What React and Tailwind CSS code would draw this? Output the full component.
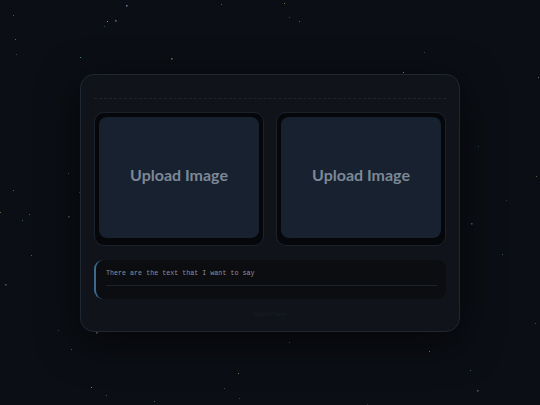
import React from "react";

function rng(seed) {
  let s = seed;
  return () => {
    s = (s * 16807) % 2147483647;
    return (s - 1) / 2147483646;
  };
}

const stars = (() => {
  const r = rng(42);
  const colors = ["#6b7a99", "#4f8a8b", "#8a7d5a", "#5d6b8a", "#c9b36a", "#3f6f7a"];
  const out = [];
  for (let i = 0; i < 80; i++) {
    out.push({
      x: Math.round(r() * 540),
      y: Math.round(r() * 405),
      c: colors[Math.floor(r() * colors.length)],
      o: 0.35 + r() * 0.6,
      s: r() > 0.88 ? 1.6 : 1,
    });
  }
  return out;
})();

function UploadBox() {
  return (
    <div className="h-[134px] rounded-[10px] bg-[#05070b] border border-[#1c222c] pt-[4px] px-[4px] pb-[7px]">
      <div className="h-full rounded-[8px] bg-[#172130] flex items-center justify-center pb-[4px]">
        <span className="text-[16px] font-bold text-[#7d8896]" style={{ fontFamily: "Lato, sans-serif" }}>
          Upload Image
        </span>
      </div>
    </div>
  );
}

export default function App() {
  return (
    <div className="relative w-[540px] h-[405px] bg-[#0b0e14] flex items-center justify-center overflow-hidden">
      <svg className="absolute inset-0" width="540" height="405">
        {stars.map((s, i) => (
          <rect key={i} x={s.x} y={s.y} width={s.s} height={s.s} fill={s.c} opacity={s.o} />
        ))}
      </svg>
      <div className="relative w-[380px] h-[258px] rounded-[14px] border border-[#1f2733] bg-[#10131a] px-[13px] pt-[23px] shadow-[0_10px_40px_rgba(0,0,0,0.6)]">
        <div className="border-t border-dashed border-[#1e242e]" />
        <div className="mt-[13px] grid grid-cols-2 gap-[12px]">
          <UploadBox />
          <UploadBox />
        </div>
        <div className="mt-[14px] h-[39px] rounded-[9px] bg-[#0b0d11] border-l-2 border-[#3a6a8e] pl-[10px] pr-[9px] pt-[8px]">
          <div
            className="text-[6.7px] text-[#8c9098] leading-[10px] pb-[7px] border-b border-[#1d232d]"
            style={{ fontFamily: '"Liberation Mono", monospace' }}
          >
            There are the text that I want to say
          </div>
        </div>
        <div className="mt-[10px] flex justify-center">
          <span className="text-[6px] text-[#181e27]" style={{ fontFamily: "Lato, sans-serif" }}>
            Submit here
          </span>
        </div>
      </div>
    </div>
  );
}
